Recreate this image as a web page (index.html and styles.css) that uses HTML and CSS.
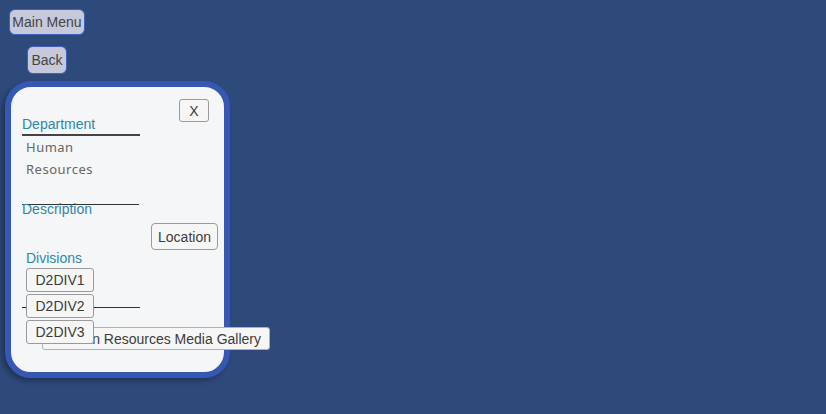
FILE: index.html
```html
<!DOCTYPE html>
<html>
<head>
<meta charset="utf-8">
<link rel="stylesheet" href="styles.css">
</head>
<body>
<div class="page">
  <button class="nav-btn main-menu">Main Menu</button>
  <button class="nav-btn back">Back</button>
  <div class="card">
    <div class="header">
      <div class="dept-label">Department</div>
      <button class="btn close">X</button>
    </div>
    <div class="dept-name">Human<br>Resources</div>
    <div class="rule"></div>
    <div class="label desc">Description</div>
    <div class="loc-row"><button class="btn location">Location</button></div>
    <div class="label divisions">Divisions</div>
    <div class="div-list">
      <button class="btn div-btn">D2DIV1</button>
      <button class="btn div-btn">D2DIV2</button>
      <button class="btn div-btn">D2DIV3</button>
    </div>
    <div class="rule-over"></div>
    <button class="btn gallery">Human Resources Media Gallery</button>
  </div>
</div>
</body>
</html>
```

FILE: styles.css
```css
html, body {
  margin: 0;
  padding: 0;
  background: #2d4a7b;
  width: 826px;
  height: 414px;
  overflow: hidden;
}
.page {
  display: flex;
  flex-direction: column;
  align-items: flex-start;
  font-family: "Liberation Sans", Arial, sans-serif;
}
button {
  font-family: "Liberation Sans", Arial, sans-serif;
  font-size: 14px;
  color: #3c3c3c;
  padding: 0;
  margin: 0;
  box-sizing: border-box;
  cursor: pointer;
}
.nav-btn {
  background: #c6c9db;
  border: 1px solid #3f5fc2;
  border-radius: 6px;
  color: #444;
}
.main-menu {
  margin: 9px 0 0 9px;
  width: 76px;
  height: 26px;
}
.back {
  margin: 11px 0 0 27px;
  width: 40px;
  height: 28px;
}
.card {
  position: relative;
  box-sizing: border-box;
  margin: 7px 0 0 5px;
  width: 225px;
  height: 297px;
  background: #f5f6f8;
  border: 6px solid #3657b4;
  border-radius: 26px;
  box-shadow: -3px 3px 5px rgba(0, 0, 0, 0.3);
  display: flex;
  flex-direction: column;
  align-items: flex-start;
}
.btn {
  background: #f6f6f6;
  border: 1px solid #9a9a9a;
  border-radius: 3px;
}
.header {
  margin-top: 12px;
  display: flex;
  justify-content: space-between;
  align-items: flex-start;
  align-self: stretch;
}
.dept-label {
  margin-left: 11px;
  margin-top: 17px;
  width: 118px;
  font-size: 14px;
  line-height: 16px;
  color: #2b88a8;
  padding-bottom: 2px;
  border-bottom: 2px solid #444;
}
.close {
  margin-right: 15px;
  width: 30px;
  height: 23px;
}
.dept-name {
  margin-left: 15px;
  font-family: "Noto Sans", "Open Sans", sans-serif;
  font-size: 13px;
  line-height: 22px;
  letter-spacing: 0.5px;
  color: #666;
}
.rule {
  margin: 24px 0 0 11px;
  width: 117px;
  height: 1px;
  background: #333;
}
.label {
  font-size: 14px;
  line-height: 16px;
  color: #2b88a8;
}
.desc {
  margin: -4px 0 0 11px;
}
.loc-row {
  margin-top: 6px;
  align-self: stretch;
  display: flex;
  justify-content: flex-end;
}
.location {
  margin-right: 6px;
  width: 67px;
  height: 27px;
  border-radius: 4px;
}
.divisions {
  margin-left: 15px;
}
.div-list {
  margin: 2px 0 0 15px;
  display: flex;
  flex-direction: column;
  gap: 2px;
}
.div-btn {
  position: relative;
  z-index: 2;
  width: 68px;
  height: 24px;
}
.rule-over {
  position: absolute;
  left: 11px;
  top: 220px;
  width: 118px;
  height: 1px;
  background: #333;
  z-index: 1;
}
.gallery {
  position: absolute;
  z-index: 1;
  left: 31px;
  top: 240px;
  width: 228px;
  height: 23px;
  padding: 0 8px;
  text-align: right;
  white-space: nowrap;
  border-color: #b0b0b0;
}
```
